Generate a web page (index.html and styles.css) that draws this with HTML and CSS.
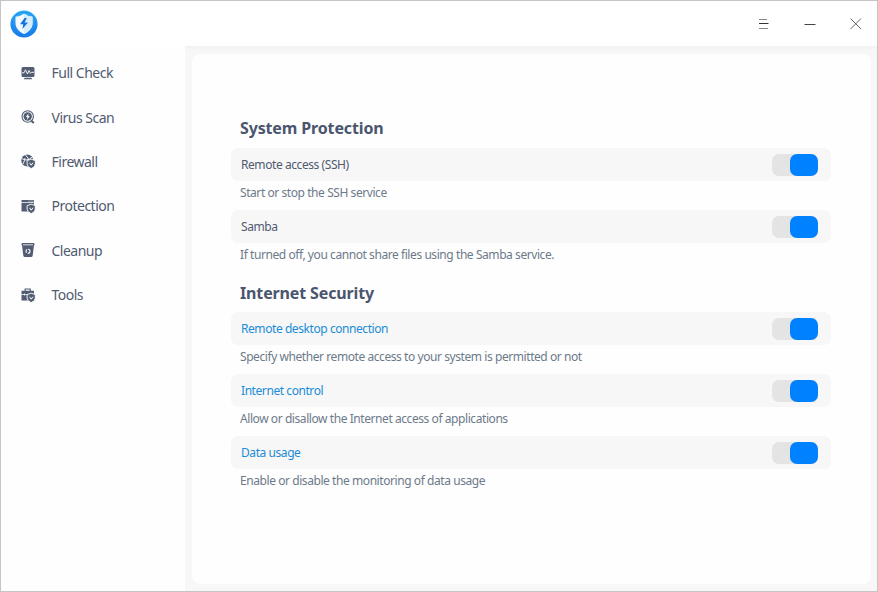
FILE: index.html
```html
<!DOCTYPE html>
<html lang="en">
<head>
<meta charset="utf-8">
<title>Security Center</title>
<link rel="stylesheet" href="styles.css">
</head>
<body>
<div class="window">
  <header class="titlebar">
    <svg class="logo" viewBox="0 0 28 28">
      <defs>
        <linearGradient id="disc" x1="0" y1="0" x2="0" y2="1"><stop offset="0" stop-color="#35b4f5"/><stop offset="1" stop-color="#1677ec"/></linearGradient>
      </defs>
      <circle cx="14" cy="14" r="13.6" fill="url(#disc)"/>
      <circle cx="14" cy="14" r="11.8" fill="none" stroke="#1583e2" stroke-width="1.2" opacity=".6"/>
      <path d="M14 3.8Q17.6 6.500 22.500 6.700V13C22.500 18.500 18.500 22 14 24C9.500 22 5.500 18.500 5.500 13V6.700Q10.400 6.500 14 3.800Z" fill="#f2faff"/>
      <path d="M14 3.800Q17.600 6.500 22.500 6.700V13C22.500 18.500 18.500 22 14 24Z" fill="#d8edfc"/>
      <path d="M14.800 7.800L10 14.200H13.200L12.400 19L18 12.500H14.500L16.800 8.300Z" fill="#1270df"/>
    </svg>
    <div class="controls">
      <svg viewBox="0 0 14 14"><path d="M2 2.500h8M2 11.500h9" stroke="#888"/><path d="M2 6.500h9.500" stroke="#333"/></svg>
      <svg viewBox="0 0 14 14"><path d="M1.500 7.500h11" stroke="#444"/></svg>
      <svg viewBox="0 0 14 14"><path d="M1.500 1.500l10.500 10.500M12 1.500L1.500 12" stroke="#555" stroke-width=".9"/></svg>
    </div>
  </header>
  <div class="body">
    <nav class="sidebar">
      <a class="item"><svg viewBox="0 0 14 14"><path class="f" d="M2 1h10q1.500 0 1.500 1.500v7q0 1.500-1.500 1.500H2Q.5 11 .5 9.500v-7Q.5 1 2 1ZM3.500 11.700h7l.5 1.500H3Z"/><path d="M1 6.800h2l1.500-3 2 4.200L8 4.500l1.500 2.800 1-1H13" fill="none" stroke="#fff" stroke-width=".9"/></svg>Full Check</a>
      <a class="item"><svg viewBox="0 0 14 14"><circle cx="6.700" cy="6.500" r="5.700" fill="none" stroke="#525d73" stroke-width="1.100"/><circle class="f" cx="6.700" cy="6.500" r="4.200"/><path d="M7.500 3.200L4.900 7h1.500L5.900 10 8.800 6H7.200Z" fill="#fff"/><path d="M10 10.500l2.800 2.500" stroke="#525d73" stroke-width="2"/></svg>Virus Scan</a>
      <a class="item"><svg viewBox="0 0 14 14"><circle class="f" cx="6.300" cy="6.500" r="6"/><path d="M1 4.500Q5 8 11.500 3M4.500 1Q8 4 8 8M2 10Q4 6 4 4" fill="none" stroke="#fff" stroke-width=".9"/><use href="#guard"/></svg>Firewall</a>
      <a class="item"><svg viewBox="0 0 14 14"><path class="f" d="M.5 1h12.500v2.200H.5ZM.5 4h12.500v8.500H.5Z"/><path d="M7.500 2.100h1M9.500 2.100h1M11.500 2.100h1" stroke="#fff" stroke-width=".8"/>
        <g id="guard"><path class="shield" d="M10.200 5.200L14.300 6.600v3.400q0 3-4.100 4.600-4.100-1.600-4.100-4.600V6.600Z"/><path class="tick" d="M8.500 8.800l1.700 2.400 1.700-2.400"/></g></svg>Protection</a>
      <a class="item"><svg viewBox="0 0 14 14"><path class="f" d="M1.500 0h11q1 0 1 1v1.300H.5V1Q.5 0 1.500 0ZM1 2.300h12l-1.300 10.200Q11.500 14 10 14H4Q2.500 14 2.300 12.500Z"/><path d="M2 1.800h10" stroke="#fff" stroke-width=".8"/><circle cx="7" cy="8.200" r="2" fill="none" stroke="#fff" stroke-width="1.100" stroke-dasharray="3.190 1"/></svg>Cleanup</a>
      <a class="item"><svg viewBox="0 0 14 14"><path d="M4.200 3V1h5v2" fill="none" stroke="#525d73" stroke-width="1.200"/><path class="f" d="M.5 2.800h12.500v3.500H.5ZM.5 7h12.500v5.500H.5Z"/><path d="M3.500 5.500v2" stroke="#fff" stroke-width=".8"/><use href="#guard"/></svg>Tools</a>
    </nav>
    <main class="card">
      <h2>System Protection</h2>
      <div class="row"><span>Remote access (SSH)</span><i class="toggle"></i></div>
      <p>Start or stop the SSH service</p>
      <div class="row"><span>Samba</span><i class="toggle"></i></div>
      <p>If turned off, you cannot share files using the Samba service.</p>
      <h2 class="second">Internet Security</h2>
      <div class="row link"><span>Remote desktop connection</span><i class="toggle"></i></div>
      <p>Specify whether remote access to your system is permitted or not</p>
      <div class="row link"><span>Internet control</span><i class="toggle"></i></div>
      <p>Allow or disallow the Internet access of applications</p>
      <div class="row link"><span>Data usage</span><i class="toggle"></i></div>
      <p>Enable or disable the monitoring of data usage</p>
    </main>
  </div>
</div>
</body>
</html>
```
FILE: styles.css
```css
* { box-sizing: border-box; }
body { margin: 0; font-family: "Noto Sans", sans-serif; color: #505a70; }
.window { width: 878px; height: 592px; border: 1px solid #c6c5c3; background: #f7f7f7; display: flex; flex-direction: column; overflow: hidden; }
.titlebar { height: 45px; flex: none; background: #fff; display: flex; align-items: center; justify-content: space-between; padding: 0 14px 0 8.5px; box-shadow: 0 0 6px rgba(0,0,0,.05); }
.logo { width: 28px; height: 28px; }
.controls { display: flex; gap: 32px; padding-top: 1px; }
.controls svg { width: 14px; height: 14px; display: block; }
.body { flex: 1; display: flex; }
.sidebar { width: 184px; background: #fefefe; padding-top: 4.5px; }
.item { display: flex; align-items: center; height: 44.4px; padding-left: 20px; gap: 16.5px; font-size: 14px; letter-spacing: -.5px; color: #505a70; }
.item svg { width: 14px; height: 14px; overflow: visible; }
.f { fill: #525d73; }
.shield { fill: #525d73; stroke: #fff; stroke-width: .9; }
.tick { fill: none; stroke: #fff; stroke-width: 1; }
.card { flex: 1; margin: 8px 6px 7px 7px; padding: 63px 40px 0 39px; background: #fefefe; border-radius: 8px; }
h2 { margin: 0 0 8px 9px; font-size: 16px; line-height: 23px; font-weight: 700; letter-spacing: -.14px; color: #4a556e; }
.second { margin-top: 15px; margin-bottom: 7px; }
.row { height: 33px; border-radius: 7px; background: #f7f7f7; display: flex; align-items: center; justify-content: space-between; padding: 0 13px 0 10px; font-size: 12px; letter-spacing: -.43px; color: #505a70; }
.link { color: #1a8cd8; }
p { margin: 0 0 5px 9px; font-size: 12px; line-height: 24px; letter-spacing: -.43px; color: #6c7a8a; }
.toggle { width: 46px; height: 22px; border-radius: 7px; background: #e4e4e4; display: flex; justify-content: flex-end; }
.toggle::after { content: ""; width: 28px; height: 22px; border-radius: 7px; background: #0081ff; }
```
